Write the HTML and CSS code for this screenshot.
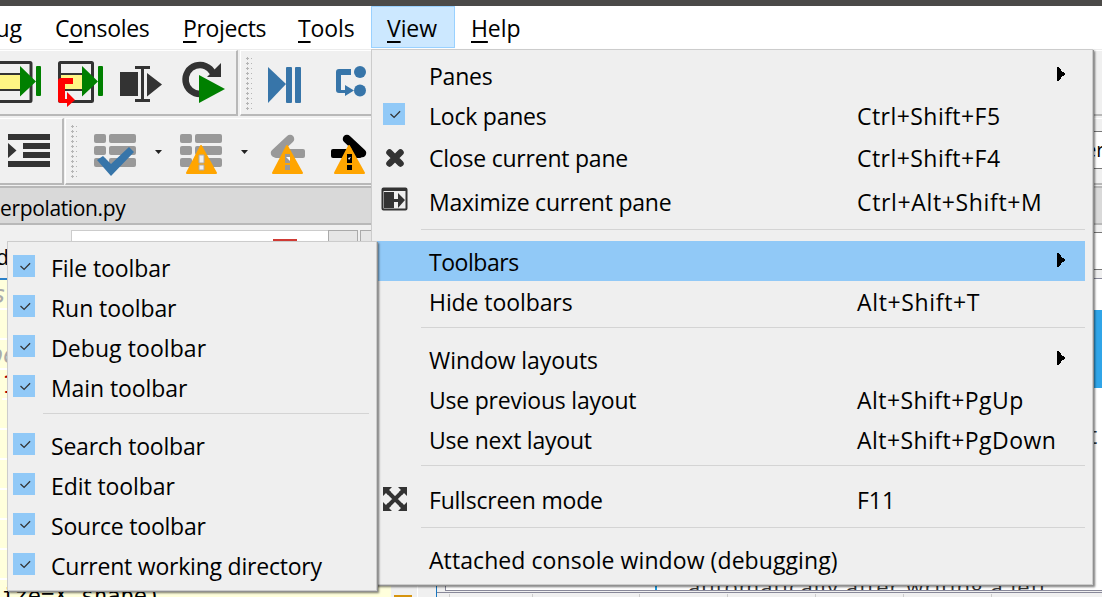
FILE: index.html
```html
<!DOCTYPE html>
<html lang="en">
<head>
<meta charset="utf-8">
<title>View menu</title>
<link rel="stylesheet" href="styles.css">
</head>
<body>
<svg class="defs" aria-hidden="true">
  <symbol id="check" viewBox="0 0 22 22"><path d="M7.5 11l3.6 3.4 6-6.2" fill="none" stroke="#333" stroke-width="1.3"/></symbol>
  <symbol id="arrow" viewBox="0 0 9 14"><path d="M0 0h2v1h1v1h1v2h1v1h2v1h1v2H7v1H5v1H4v2H3v1H2v1H0z" fill="#000"/></symbol>
  <symbol id="list" viewBox="0 0 42 33"><g fill="#999"><rect width="12" height="9" rx="2"/><rect x="15" width="27" height="9" rx="2"/><rect y="12" width="12" height="9" rx="2"/><rect x="15" y="12" width="27" height="9" rx="2"/><rect y="24" width="12" height="9" rx="2"/><rect x="15" y="24" width="27" height="9" rx="2"/></g></symbol>
</svg>
<div class="window">
  <div class="titlebar"></div>
  <nav class="menubar">
    <span class="mb debug">ug</span>
    <span class="mb consoles">C<u>o</u>nsoles</span>
    <span class="mb projects"><u>P</u>rojects</span>
    <span class="mb tools"><u>T</u>ools</span>
    <span class="mb view"><u>V</u>iew</span>
    <span class="mb help"><u>H</u>elp</span>
  </nav>

  <div class="toolrow first">
    <div class="toolbar run">
      <svg width="237" height="64" viewBox="0 51 237 64">
        <g fill="none" stroke="#333" stroke-width="3"><rect x="-8" y="62.500" width="39" height="39" rx="1"/><rect x="59.500" y="62.500" width="33" height="39" rx="1"/></g>
        <path d="M0 73h22v18H0zM61 73h23v18H61z" fill="#333"/>
        <path d="M0 75h22v14H0zM61 75h23v14H61z" fill="#fff584"/>
        <path d="M20 66l16 15.500L20 96.500zM82 66l16 15.500L82 96.500z" fill="#008000"/>
        <rect x="36" y="66" width="5" height="30" rx="1" fill="#008000"/><rect x="98" y="66" width="5" height="30" rx="1" fill="#008000"/>
        <path d="M73 78v6h-8v15h2v-7l8 8-8 7v-4h-6q-3 0-3-3V81q0-3 3-3z" fill="#f00"/>
        <g fill="#333"><rect x="120" y="72" width="18" height="24"/><path d="M135 66h15v3h-6v30h6v3h-15v-3h6V69h-6zM147 73l15 11.500-15 12z"/></g>
        <path d="M200 94a14.500 14.500 0 1 1 13-21" fill="none" stroke="#333" stroke-width="6.500"/>
        <path d="M221 63v14h-14z" fill="#333"/>
        <path d="M199 75l26 14-26 14z" fill="#008000"/>
      </svg>
    </div>
    <div class="toolbar fill">
      <div class="grip"></div>
      <svg width="124" height="64" viewBox="252 51 124 64">
        <g fill="#3775a9"><path d="M268 67l18 17-18 19z"/><rect x="286" y="67" width="6" height="36" rx="1"/><rect x="295" y="67" width="6" height="36" rx="1"/>
        <circle cx="360" cy="72" r="6"/><circle cx="360" cy="90.500" r="6"/>
        <path d="M351 69v6h-10v15h4v-5l9 5.500-9 5.500v-3h-6q-3 0-3-3V72q0-3 3-3z"/></g>
      </svg>
    </div>
  </div>
  <div class="toolrow second">
    <div class="toolbar indent">
      <svg width="62" height="65" viewBox="0 119 62 65"><path d="M8 134h42v6H8zM23 143h27v6H23zM23 152h27v6H23zM8 161h42v6H8zM8 143l8.500 7.500L8 158z" fill="#333"/></svg>
    </div>
    <div class="toolbar fill">
      <div class="grip"></div>
      <svg width="293" height="65" viewBox="77 119 293 65">
        <use href="#list" x="94" y="134" width="42" height="33"/>
        <path d="M97 160l6-4 8 8 18-17 5 5-23 24z" fill="#3775a9"/>
        <path d="M155 150h7l-3.500 4zM241 150h7l-3.500 4z" fill="#222"/>
        <use href="#list" x="180" y="134" width="42" height="33"/>
        <g stroke-width="8.500" stroke-linecap="round"><path d="M275 153l15-14" stroke="#999"/><path d="M347 139l15 14" stroke="#000"/></g>
        <rect x="274" y="149" width="31" height="9" rx="2" fill="#999"/><rect x="331" y="149" width="31" height="9" rx="2"/>
        <g fill="#ffa500" stroke="#ffa500" stroke-width="2" stroke-linejoin="round"><path d="M201 146l15 27h-29zM287 146l15 27h-29zM349 146l15 27h-29z"/></g>
        <path d="M199 155h5v8h-5zM199 165h5v5h-5z" fill="#f0f0f0" stroke="#aaa"/>
        <path d="M285 154h5v9h-5zM285 165h5v5h-5z" fill="#999"/><path d="M286 157h4v4z" fill="#fff"/>
        <path d="M347 154h5v9h-5zM347 165h5v5h-5z" fill="#000"/><path d="M348 158l3-1-2 3z" fill="#fff"/>
      </svg>
    </div>
    <div class="pathbox">er</div>
  </div>
  <div class="pathbar">erpolation.py</div>
  <div class="workspace">
    <div class="editor">
      <div class="tabs"><span class="tabtext">d</span><div class="tab"><i></i></div><div class="tabbtn"></div><div class="tabbtn"></div></div>
      <div class="coderow">
        <div class="code">
          <p class="comment">s</p><p></p><p class="comment pe">pe</p><p class="red">1</p><p></p><p></p><p></p><p></p><p></p><p></p><p class="last">size=X.shape)</p>
        </div>
        <div class="flags"><i></i></div>
      </div>
    </div>
    <div class="help-pane">
      <div class="field"></div>
      <div class="page"><div class="banner"></div><div class="t">t</div>
        <div class="doc">automatically after writing a left</div></div>
      <div class="status"><i></i><i></i><i></i><i></i><i></i><i></i><i></i></div>
    </div>
  </div>

  <div class="menu main-menu">
    <div class="item"><span class="label">Panes</span><svg class="sub"><use href="#arrow"/></svg></div>
    <div class="item"><svg class="box"><use href="#check"/></svg><span class="label">Lock panes</span><span class="key">Ctrl+Shift+F5</span></div>
    <div class="item tall"><svg class="icon" viewBox="0 0 28 28"><path d="M8.500 9.500l11 11M19.500 9.500l-11 11" stroke="#333" stroke-width="6.500" stroke-linecap="round"/></svg><span class="label">Close current pane</span><span class="key">Ctrl+Shift+F4</span></div>
    <div class="item tall"><svg class="icon" viewBox="0 0 28 28"><rect x="1.500" y="1.500" width="24" height="21" rx="1" fill="none" stroke="#333" stroke-width="2"/><path d="M1 1h25v3H1zM3 5h10v7h4V6l7 7-7 8v-6h-4v6H3z" fill="#333"/></svg><span class="label">Maximize current pane</span><span class="key wide">Ctrl+Alt+Shift+M</span></div>
    <div class="sep"></div>
    <div class="item active"><span class="label tight">Toolbars</span><svg class="sub"><use href="#arrow"/></svg></div>
    <div class="item"><span class="label even">Hide toolbars</span><span class="key wide">Alt+Shift+T</span></div>
    <div class="sep"></div>
    <div class="item"><span class="label even">Window layouts</span><svg class="sub"><use href="#arrow"/></svg></div>
    <div class="item"><span class="label">Use previous layout</span><span class="key">Alt+Shift+PgUp</span></div>
    <div class="item"><span class="label">Use next layout</span><span class="key">Alt+Shift+PgDown</span></div>
    <div class="sep"></div>
    <div class="item tall"><svg class="icon" viewBox="0 0 28 28"><path d="M7 7l14 14M21 7L7 21" stroke="#333" stroke-width="4"/><path d="M2 2h9l-3 3 2 2-3 3-2-2-3 3zM26 2v9l-3-3-2 2-3-3 2-2-3-3zM2 26v-9l3 3 2-2 3 3-2 2 3 3zM26 26h-9l3-3-2-2 3-3 2 2 3-3z" fill="#333"/></svg><span class="label">Fullscreen mode</span><span class="key f11">F11</span></div>
    <div class="sep"></div>
    <div class="item"><span class="label loose">Attached console window (debugging)</span></div>
  </div>

  <div class="menu sub-menu">
    <div class="item"><svg class="box"><use href="#check"/></svg><span class="label even">File toolbar</span></div>
    <div class="item"><svg class="box"><use href="#check"/></svg><span class="label even">Run toolbar</span></div>
    <div class="item"><svg class="box"><use href="#check"/></svg><span class="label loose">Debug toolbar</span></div>
    <div class="item"><svg class="box"><use href="#check"/></svg><span class="label even">Main toolbar</span></div>
    <div class="sep"></div>
    <div class="item"><svg class="box"><use href="#check"/></svg><span class="label">Search toolbar</span></div>
    <div class="item"><svg class="box"><use href="#check"/></svg><span class="label even">Edit toolbar</span></div>
    <div class="item"><svg class="box"><use href="#check"/></svg><span class="label">Source toolbar</span></div>
    <div class="item"><svg class="box"><use href="#check"/></svg><span class="label">Current working directory</span></div>
  </div>
</div>
</body>
</html>
```
FILE: styles.css
```css
* { box-sizing: border-box; }
body { margin: 0; overflow: hidden; font: 23px/32px "Open Sans", "Noto Sans", sans-serif; color: #000; white-space: nowrap; }
.defs { position: absolute; width: 0; height: 0; }
svg { display: block; flex: none; }
.window { position: relative; width: 1102px; height: 597px; overflow: hidden; display: flex; flex-direction: column; background: #f0f0f0; }
.window > * { flex: none; }
.titlebar { height: 6px; background: #4b4a48; }
.menubar { height: 44px; background: #fff; border-bottom: 1px solid #ececec; display: flex; align-items: flex-start; letter-spacing: -.1px; }
.mb { height: 42px; line-height: 44px; padding-left: 16px; }
.mb u { text-decoration-thickness: 2px; text-underline-offset: 4px; text-decoration-skip-ink: none; }
.debug { width: 39px; padding: 0 17px 0 0; display: flex; justify-content: flex-end; }
.consoles { width: 128px; letter-spacing: -.3px; }
.projects { width: 115px; letter-spacing: -.35px; }
.tools { width: 89px; }
.view { width: 84px; background: #cce8ff; border: 1px solid #99d1ff; line-height: 42px; padding-left: 15px; }
.toolrow { display: flex; gap: 2px; }
.first { height: 66px; }
.second { height: 70px; padding-top: 2px; border-bottom: 1px solid #f0f0f0; gap: 0; }
.toolbar { display: flex; border-top: 1px solid #fff; border-bottom: 2px solid #b8b8b8; border-right: 2px solid #b8b8b8; border-left: 1px solid #fff; }
.run { width: 238px; border-left: 0; }
.indent { width: 64px; border-left: 0; }
.second .toolbar { height: 67px; }
.second .fill { margin-left: 1px; }
.fill { flex: 1; border-right: 0; }
.grip { width: 7px; height: 54px; margin: 5px 0 0 4px; background: radial-gradient(circle, #b5b5b5 1px, transparent 1.3px) 0 0 / 5px 5px; }
.pathbox { width: 16px; margin: 13px 0 0 -18px; height: 38px; border: 1px solid #777; border-right: 0; background: #fff; font-size: 20px; line-height: 36px; overflow: hidden; }
.second .pathbox { margin-right: 0; width: 18px; }
.pathbar { height: 39px; border-top: 2px solid #b8b8b8; border-bottom: 2px solid #b8b8b8; background: #d9d9d9; font-size: 21px; line-height: 41px; letter-spacing: -.35px; }
.workspace { flex: 1 0 0 !important; min-height: 0; display: flex; }
.editor { width: 436px; display: flex; flex-direction: column; overflow: hidden; }
.tabs { height: 55px; border-bottom: 2px solid #2a80c8; display: flex; padding-top: 5px; flex: none; }
.tabtext { width: 71px; line-height: 54px; font-size: 21px; margin-left: -4px; }
.tab { width: 262px; margin-left: 4px; background: #fff; border: 1px solid #ccc; display: flex; padding: 8px 0 0 201px; margin-right: -5px; }
.tab i { width: 24px; height: 4px; background: #d03b35; }
.tabbtn { width: 30px; height: 40px; border: 1px solid #aaa; background: #e6e6e6; margin-right: 2px; }
.coderow { display: flex; flex: 1; min-height: 0; }
.code { width: 391px; background: #ffffdc; font: 25px/29px "DejaVu Sans Mono", monospace; overflow: hidden; }
.code p { height: 30px; margin: 0; border-bottom: 2px solid #fff; }
.code .comment { color: #aaa; font-style: italic; margin-left: -9px; }
.code .pe { margin-left: -12px; }
.code .red { color: #a00; margin-left: 2px; }
.code .last { font-size: 22px; margin-left: -12px; line-height: 31px; }
.flags { width: 27px; border-right: 1px solid #fff; display: flex; align-items: flex-end; padding-left: 3px; }
.flags i { width: 18px; height: 2px; background: #d6940f; }
.help-pane { flex: 1; border-left: 1px solid #1877c0; display: flex; flex-direction: column; padding-top: 7px; min-width: 0; }
.field { height: 38px; background: #fff; border: 1px solid #777; border-right: 0; flex: none; }
.page { height: 313px; flex: none; margin: 8px 0 0 8px; border: 1px solid #889; border-right: 0; background: #fff; overflow: hidden; display: flex; flex-direction: column; padding-top: 31px; }
.banner { height: 78px; background: #30a5e8; flex: none; }
.t { margin: 31px 0 0 643px; color: #333; line-height: 32px; flex: none; }
.doc { flex: none; margin: 117px 0 0 209px; border-left: 2px solid #1b9be0; padding-left: 31px; height: 60px; font-size: 22px; line-height: 36px; color: #333; letter-spacing: 1.02px; }
.status { height: 6px; margin-top: 1px; border-top: 1px solid #889; display: flex; padding-left: 12px; }
.status i { width: 88px; border-left: 1px solid #ccc; margin-top: 1px; }
.status i:first-child { width: 83px; }
.status i:nth-child(2) { width: 107px; }

.menu { position: absolute; background: #efefef; border: 1px solid #ccc; box-shadow: 1px 1px 0 #909090, 2px 2px 2px #0008; padding: 5px 7px 5px 5px; }
.main-menu { left: 371px; top: 49px; width: 722px; height: 536px; }
.sub-menu { left: 7px; top: 241px; width: 370px; height: 350px; }
.item { position: relative; height: 40px; display: flex; padding: 5px 0 0 52px; }
.item.tall { height: 44px; padding-top: 7px; }
.sub-menu .item { padding-left: 38px; }
.active { background: #91c9f7; }
.sep { height: 18px; margin-left: 44px; padding-top: 6px; }
.sep::before { content: ""; display: block; height: 1px; background: #d4d4d4; }
.sub-menu .sep { margin-left: 30px; }
.label { width: 428px; flex: none; letter-spacing: -.22px; }
.sub-menu .label { width: auto; }
.label.even { letter-spacing: -.08px; }
.label.tight { letter-spacing: -.45px; }
.label.loose { letter-spacing: .08px; }
.key { letter-spacing: .45px; }
.key.wide { letter-spacing: .65px; }
.key.f11 { letter-spacing: 0; }
.box, .icon, .sub { position: absolute; }
.box { left: 6px; top: 8px; width: 22px; height: 22px; background: #91c9f7; }
.sub-menu .box { left: 0; }
.icon { left: 4px; top: 8px; width: 28px; height: 28px; }
.sub { right: 19px; top: 12px; width: 9px; height: 14px; }
```
